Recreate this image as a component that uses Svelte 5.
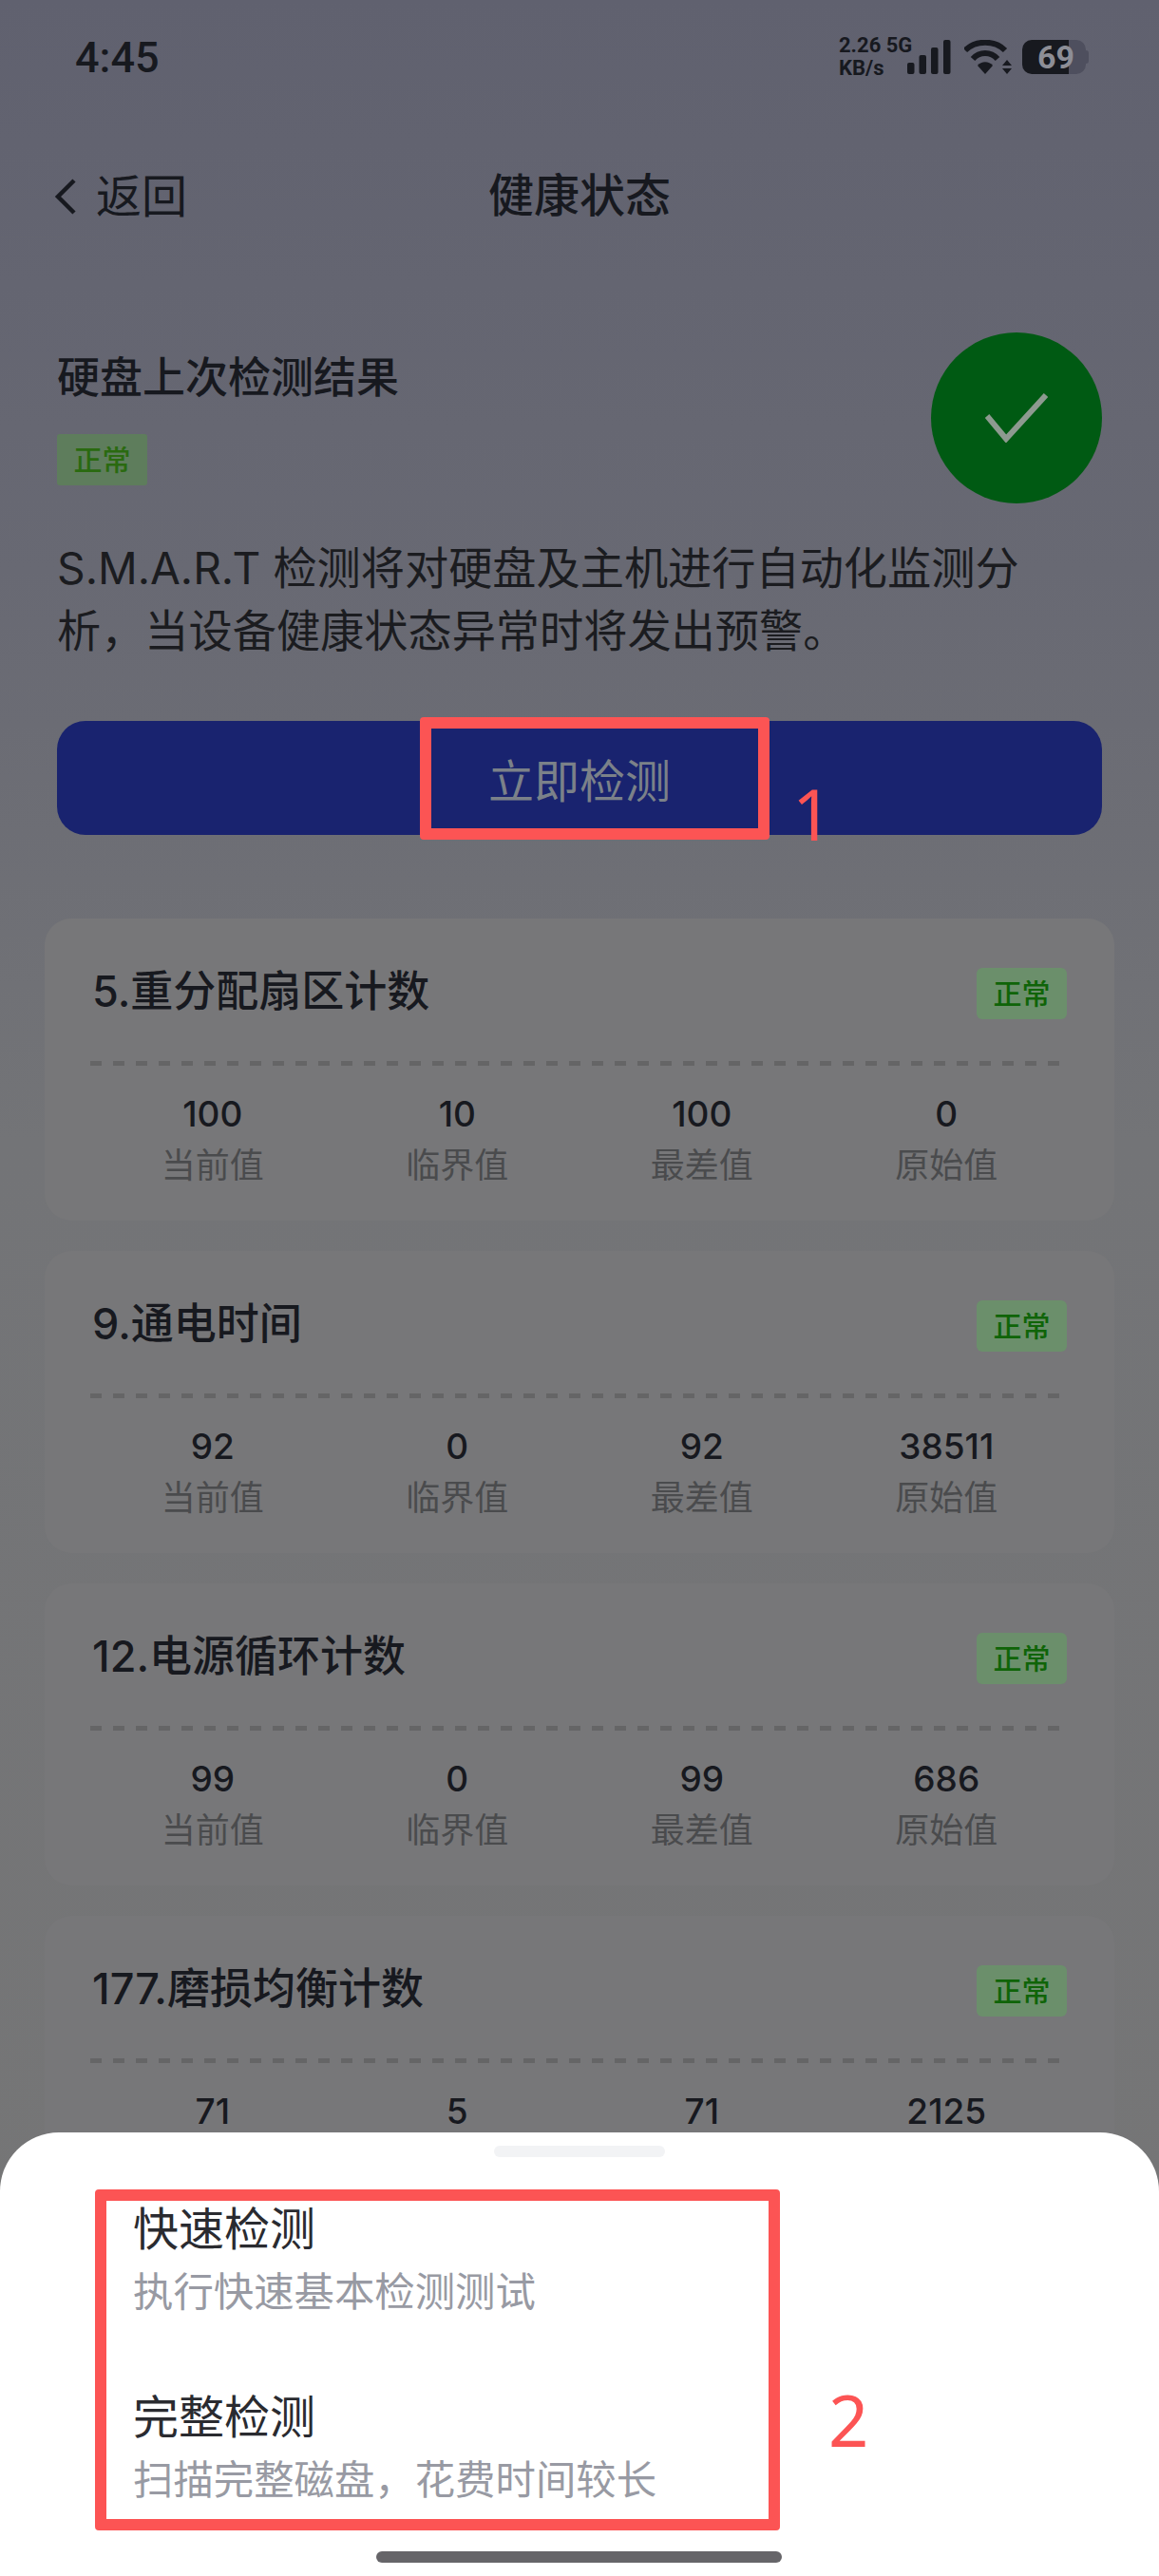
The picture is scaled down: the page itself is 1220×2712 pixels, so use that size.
<script lang="ts">
  const cards = [
    { title: '5.重分配扇区计数', values: ['100', '10', '100', '0'] },
    { title: '9.通电时间', values: ['92', '0', '92', '38511'] },
    { title: '12.电源循环计数', values: ['99', '0', '99', '686'] },
    { title: '177.磨损均衡计数', values: ['71', '5', '71', '2125'] },
  ];
  const labels = ['当前值', '临界值', '最差值', '原始值'];
  const options = [
    { name: '快速检测', hint: '执行快速基本检测测试' },
    { name: '完整检测', hint: '扫描完整磁盘，花费时间较长' },
  ];
</script>

<div class="screen">
  <header class="status">
    <span class="status__time">4:45</span>
    <div class="status__icons">
      <div class="status__speed">
        <span>2.26 5G</span>
        <span>KB/s</span>
      </div>
      <svg class="status__signal" width="46" height="36" viewBox="0 0 46 36" aria-hidden="true">
        <rect x="0" y="24" width="7.5" height="12" rx="2" />
        <rect x="12.5" y="16" width="7.5" height="20" rx="2" />
        <rect x="25" y="8" width="7.5" height="28" rx="2" />
        <rect x="38" y="0" width="7.5" height="36" rx="2" />
      </svg>
      <svg class="status__wifi" width="50" height="36" viewBox="0 0 50 36" aria-hidden="true">
        <path d="M1 11 C12 0 32 0 43 11" />
        <path d="M9 20 C16 12 28 12 35 20" />
        <path class="fill" d="M14 27 C18 22 26 22 30 27 L22 36 Z" />
        <path class="fill" d="M45 21 L50 27 L40 27 Z M40 30 L50 30 L45 36 Z" />
      </svg>
      <div class="status__battery">
        <span class="status__level">69</span>
        <span class="status__nub"></span>
      </div>
    </div>
  </header>

  <nav class="nav">
    <a class="nav__back" href="#back">
      <svg width="24" height="38" viewBox="0 0 24 38" aria-hidden="true">
        <path d="M21 2 L4 19 L21 36" />
      </svg>
      <span class="nav__label">返回</span>
    </a>
    <h1 class="nav__title">健康状态</h1>
  </nav>

  <section class="summary">
    <div class="summary__head">
      <div class="summary__text">
        <h2 class="summary__title">硬盘上次检测结果</h2>
        <span class="tag tag--square">正常</span>
      </div>
      <div class="summary__badge">
        <svg width="66" height="52" viewBox="0 0 66 52" aria-hidden="true">
          <path d="M2 24 L22 48 L64 2" />
        </svg>
      </div>
    </div>
    <p class="summary__desc">S.M.A.R.T 检测将对硬盘及主机进行自动化监测分析，当设备健康状态异常时将发出预警。</p>
    <button class="summary__btn">立即检测</button>
  </section>

  <section class="list">
    {#each cards as card (card.title)}
      <article class="card">
        <div class="card__head">
          <h3 class="card__title">{card.title}</h3>
          <span class="tag">正常</span>
        </div>
        <div class="card__rule"></div>
        <div class="card__grid">
          {#each card.values as value, i}
            <div class="card__cell">
              <span class="card__value">{value}</span>
              <span class="card__label">{labels[i]}</span>
            </div>
          {/each}
        </div>
      </article>
    {/each}
  </section>

  <div class="mark mark--one"></div>
  <span class="num num--one">1</span>

  <div class="sheet">
    <div class="sheet__handle"></div>
    <ul class="sheet__list">
      {#each options as option (option.name)}
        <li class="sheet__item">
          <span class="sheet__name">{option.name}</span>
          <span class="sheet__hint">{option.hint}</span>
        </li>
      {/each}
    </ul>
    <div class="mark mark--two"></div>
    <span class="num num--two">2</span>
    <div class="sheet__home"></div>
  </div>
</div>

<style>
  :global(body) {
    margin: 0;
  }

  .screen {
    position: relative;
    width: 1220px;
    height: 2712px;
    overflow: hidden;
    background: linear-gradient(180deg, #60616f 0, #686973 600px, #737477 1200px, #767676 100%);
    color: #17191f;
    font-family: Inter, "Noto Sans CJK SC", sans-serif;
  }

  h1,
  h2,
  h3,
  p,
  ul {
    margin: 0;
    padding: 0;
  }

  .status {
    display: flex;
    align-items: center;
    justify-content: space-between;
    height: 120px;
    padding: 0 77px 0 79px;
    box-sizing: border-box;
  }

  .status__time {
    font-family: Roboto, sans-serif;
    font-size: 45px;
    font-weight: 500;
  }

  .status__icons {
    display: flex;
    align-items: center;
    height: 36px;
  }

  .status__speed {
    display: flex;
    flex-direction: column;
    width: 72px;
    font-family: Roboto, sans-serif;
    font-size: 22px;
    font-weight: 700;
    line-height: 24px;
    white-space: nowrap;
  }

  .status__signal {
    fill: #17191f;
    margin-right: 14px;
  }

  .status__wifi {
    margin-right: 11px;
  }

  .status__wifi path {
    fill: none;
    stroke: #17191f;
    stroke-width: 6;
  }

  .status__wifi .fill {
    fill: #17191f;
    stroke: none;
  }

  .status__battery {
    position: relative;
    width: 67px;
    height: 36px;
    border-radius: 10px;
    background: linear-gradient(90deg, #17191f 49px, #4e4f5e 49px);
  }

  .status__level {
    display: block;
    padding-left: 16px;
    color: #8d8e96;
    font-family: Roboto, sans-serif;
    font-size: 34px;
    font-weight: 700;
    line-height: 36px;
  }

  .status__nub {
    position: absolute;
    top: 11px;
    right: -3px;
    width: 3px;
    height: 14px;
    border-radius: 0 3px 3px 0;
    background: #4e4f5e;
  }

  .nav {
    position: relative;
    display: flex;
    align-items: center;
    justify-content: center;
    height: 174px;
  }

  .nav__back {
    position: absolute;
    left: 57px;
    display: flex;
    align-items: center;
    gap: 20px;
    color: #17191f;
    font-size: 48px;
    text-decoration: none;
  }

  .nav__label {
    margin-bottom: 8px;
  }

  .nav__back path {
    fill: none;
    stroke: #17191f;
    stroke-width: 4.5;
  }

  .nav__title {
    margin-bottom: 10px;
    font-size: 48px;
    font-weight: 500;
  }

  .summary {
    padding: 56px 60px 0;
  }

  .summary__head {
    display: flex;
    justify-content: space-between;
  }

  .summary__text {
    padding: 18px 0 0 0;
  }

  .summary__title {
    font-size: 45px;
    font-weight: 500;
    line-height: 60px;
  }

  .tag {
    display: block;
    flex: none;
    width: 95px;
    height: 54px;
    border-radius: 6px;
    background: #6b8f6b;
    color: #0f6408;
    font-size: 30px;
    font-weight: 500;
    line-height: 54px;
    text-align: center;
  }

  .tag--square {
    margin-top: 29px;
    background: #5e7d5c;
    color: #2a6a10;
    border-radius: 3px;
  }

  .summary__badge {
    display: flex;
    align-items: center;
    justify-content: center;
    width: 180px;
    height: 180px;
    border-radius: 50%;
    background: #005a13;
  }

  .summary__badge path {
    fill: none;
    stroke: #8d9a90;
    stroke-width: 6;
  }

  .summary__desc {
    margin: 35px 0 0;
    font-size: 46.2px;
    line-height: 66px;
    color: #1b1c20;
  }

  .summary__btn {
    display: block;
    width: 100%;
    height: 120px;
    margin-top: 62px;
    border: 0;
    border-radius: 30px;
    background: #19236f;
    color: #7b8189;
    font: inherit;
    font-size: 48px;
  }

  .list {
    display: flex;
    flex-direction: column;
    gap: 32px;
    margin: 88px 47px 0;
  }

  .card {
    height: 318px;
    padding: 52px 50px 0 48px;
    box-sizing: border-box;
    border-radius: 28px;
    background: #777779;
  }

  .card__head {
    display: flex;
    align-items: center;
    justify-content: space-between;
    height: 54px;
    padding-left: 2px;
  }

  .card__title {
    font-size: 45px;
    font-weight: 500;
    line-height: 54px;
    margin-bottom: 4px;
  }

  .card__rule {
    height: 5px;
    margin-top: 44px;
    background: repeating-linear-gradient(90deg, #656566 0 12px, transparent 12px 24px);
  }

  .card__grid {
    display: grid;
    grid-template-columns: repeat(4, 1fr);
    margin: 26px -2px 0 0;
  }

  .card__cell {
    display: flex;
    flex-direction: column;
    align-items: center;
    line-height: 50px;
  }

  .card__value {
    font-size: 37px;
    font-weight: 500;
  }

  .card__label {
    margin-top: 4px;
    font-size: 36px;
    color: #4a4b4d;
  }

  .mark {
    position: absolute;
    box-sizing: border-box;
    border: 12px solid #fc5454;
    border-radius: 4px;
  }

  .mark--one {
    top: 755px;
    left: 442px;
    width: 368px;
    height: 129px;
  }

  .mark--two {
    top: 60px;
    left: 100px;
    width: 721px;
    height: 359px;
  }

  .num {
    position: absolute;
    color: #fc5454;
    font-family: "Noto Sans", sans-serif;
    font-size: 74px;
    line-height: 1;
  }

  .num--one {
    top: 820px;
    left: 834px;
  }

  .num--two {
    top: 266px;
    left: 872px;
  }

  .sheet {
    position: absolute;
    top: 2245px;
    left: 0;
    width: 1220px;
    height: 467px;
    border-radius: 62px 62px 0 0;
    background: #fff;
  }

  .sheet__handle {
    width: 180px;
    height: 12px;
    margin: 14px auto 0;
    border-radius: 6px;
    background: #f2f3f5;
  }

  .sheet__list {
    display: flex;
    flex-direction: column;
    gap: 66px;
    margin: 43px 0 0 140px;
    list-style: none;
  }

  .sheet__item {
    display: flex;
    flex-direction: column;
  }

  .sheet__name {
    color: #2a2b30;
    font-size: 48px;
    line-height: 66px;
  }

  .sheet__hint {
    color: #989aa3;
    font-size: 42.4px;
    line-height: 66px;
  }

  .sheet__home {
    position: absolute;
    top: 441px;
    left: 396px;
    width: 427px;
    height: 12px;
    border-radius: 6px;
    background: #666569;
  }
</style>
